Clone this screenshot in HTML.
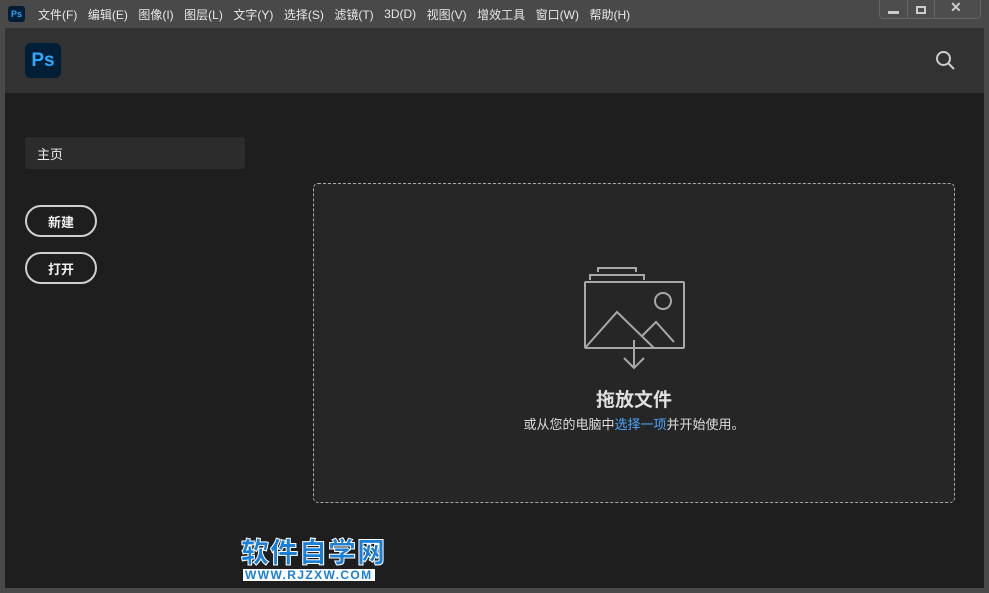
<!DOCTYPE html>
<html><head><meta charset="utf-8"><style>
*{margin:0;padding:0;box-sizing:border-box}
body{width:989px;height:593px;background:#494949;font-family:"Liberation Sans","Noto Sans CJK SC",sans-serif;position:relative;overflow:hidden}
.menu{position:absolute;top:0;left:0;height:28px;display:flex;align-items:center;font-size:12px;color:#e8e8e8}
.menu span{margin-right:10.5px}
.main{position:absolute;left:5px;top:28px;width:979px;height:560px;background:#1e1e1e}
.hdr{position:absolute;left:0;top:0;width:100%;height:65px;background:#323232}
.ps{position:absolute;background:#001e36;color:#31a8ff;font-weight:bold;display:flex;align-items:center;justify-content:center}
.btn{position:absolute;left:20px;width:72px;height:32px;border:2px solid #d0d0d0;border-radius:16px;color:#eee;font-size:13px;font-weight:bold;display:flex;align-items:center;justify-content:center}
</style></head><body>
<div class="ps" style="left:8px;top:6px;width:17px;height:16px;font-size:9px;border-radius:3px">Ps</div>
<div class="menu" style="left:38px"><span>文件(F)</span><span>编辑(E)</span><span>图像(I)</span><span>图层(L)</span><span>文字(Y)</span><span>选择(S)</span><span>滤镜(T)</span><span>3D(D)</span><span>视图(V)</span><span>增效工具</span><span>窗口(W)</span><span>帮助(H)</span></div>
<div style="position:absolute;left:879px;top:0;width:102px;height:19px;border:1px solid #666;border-top:none;border-radius:0 0 4px 4px;background:#4d4d4d">
<div style="position:absolute;left:27px;top:0;width:1px;height:18px;background:#666"></div>
<div style="position:absolute;left:54px;top:0;width:1px;height:18px;background:#666"></div>
<div style="position:absolute;left:8px;top:11px;width:11px;height:3px;background:#ccc"></div>
<div style="position:absolute;left:36px;top:6px;width:10px;height:8px;border:2px solid #ccc"></div>
<div style="position:absolute;left:70px;top:-1px;color:#ccc;font-size:14px;font-weight:bold">✕</div>
</div>
<div class="main">
<div class="hdr">
<div class="ps" style="left:20px;top:15px;width:36px;height:35px;font-size:19px;border-radius:6px">Ps</div>
<svg style="position:absolute;left:930px;top:22px" width="22" height="22" viewBox="0 0 22 22"><circle cx="8.5" cy="8.5" r="6.5" fill="none" stroke="#ccc" stroke-width="2"/><line x1="13" y1="13" x2="19" y2="19" stroke="#ccc" stroke-width="2"/></svg>
</div>
<div style="position:absolute;left:20px;top:109px;width:220px;height:32px;background:#2c2c2c;border-radius:3px;color:#eee;font-size:13px;padding:7px 12px">主页</div>
<div class="btn" style="top:177px">新建</div>
<div class="btn" style="top:224px">打开</div>
<div style="position:absolute;left:308px;top:155px;width:642px;height:320px;background:#262626;border:1px dashed #aaa;border-radius:5px">
<svg style="position:absolute;left:270px;top:82px" width="102" height="104" viewBox="0 0 102 104">
<g fill="none" stroke="#a8a8a8" stroke-width="2">
<path d="M14 6V2h38v4"/><path d="M6 14V9h54v5"/>
<rect x="1" y="16" width="99" height="66" rx="1"/>
<circle cx="79" cy="35" r="8"/>
<path d="M1 82L33 46L70 82"/><path d="M58 70L72 56L90 76"/>
<path d="M50 74V102M40 92L50 102L60 92"/>
</g></svg>
<div style="position:absolute;top:201px;width:100%;text-align:center;color:#e0e0e0;font-size:19px;font-weight:bold">拖放文件</div>
<div style="position:absolute;top:230px;width:100%;text-align:center;color:#ddd;font-size:13px">或从您的电脑中<span style="color:#4ea5ff">选择一项</span>并开始使用。</div>
</div>
<div style="position:absolute;left:236px;top:511px;color:#1a7fd6;font-size:28px;font-weight:900;line-height:28px;-webkit-text-stroke:1px #fff;letter-spacing:1px">软件自学网</div>
<div style="position:absolute;left:238px;top:541px;color:#1a7fd6;font-size:12px;font-weight:900;background:#fff;padding:0 2px;line-height:12px;letter-spacing:1.4px">WWW.RJZXW.COM</div>
</div>
</body></html>
